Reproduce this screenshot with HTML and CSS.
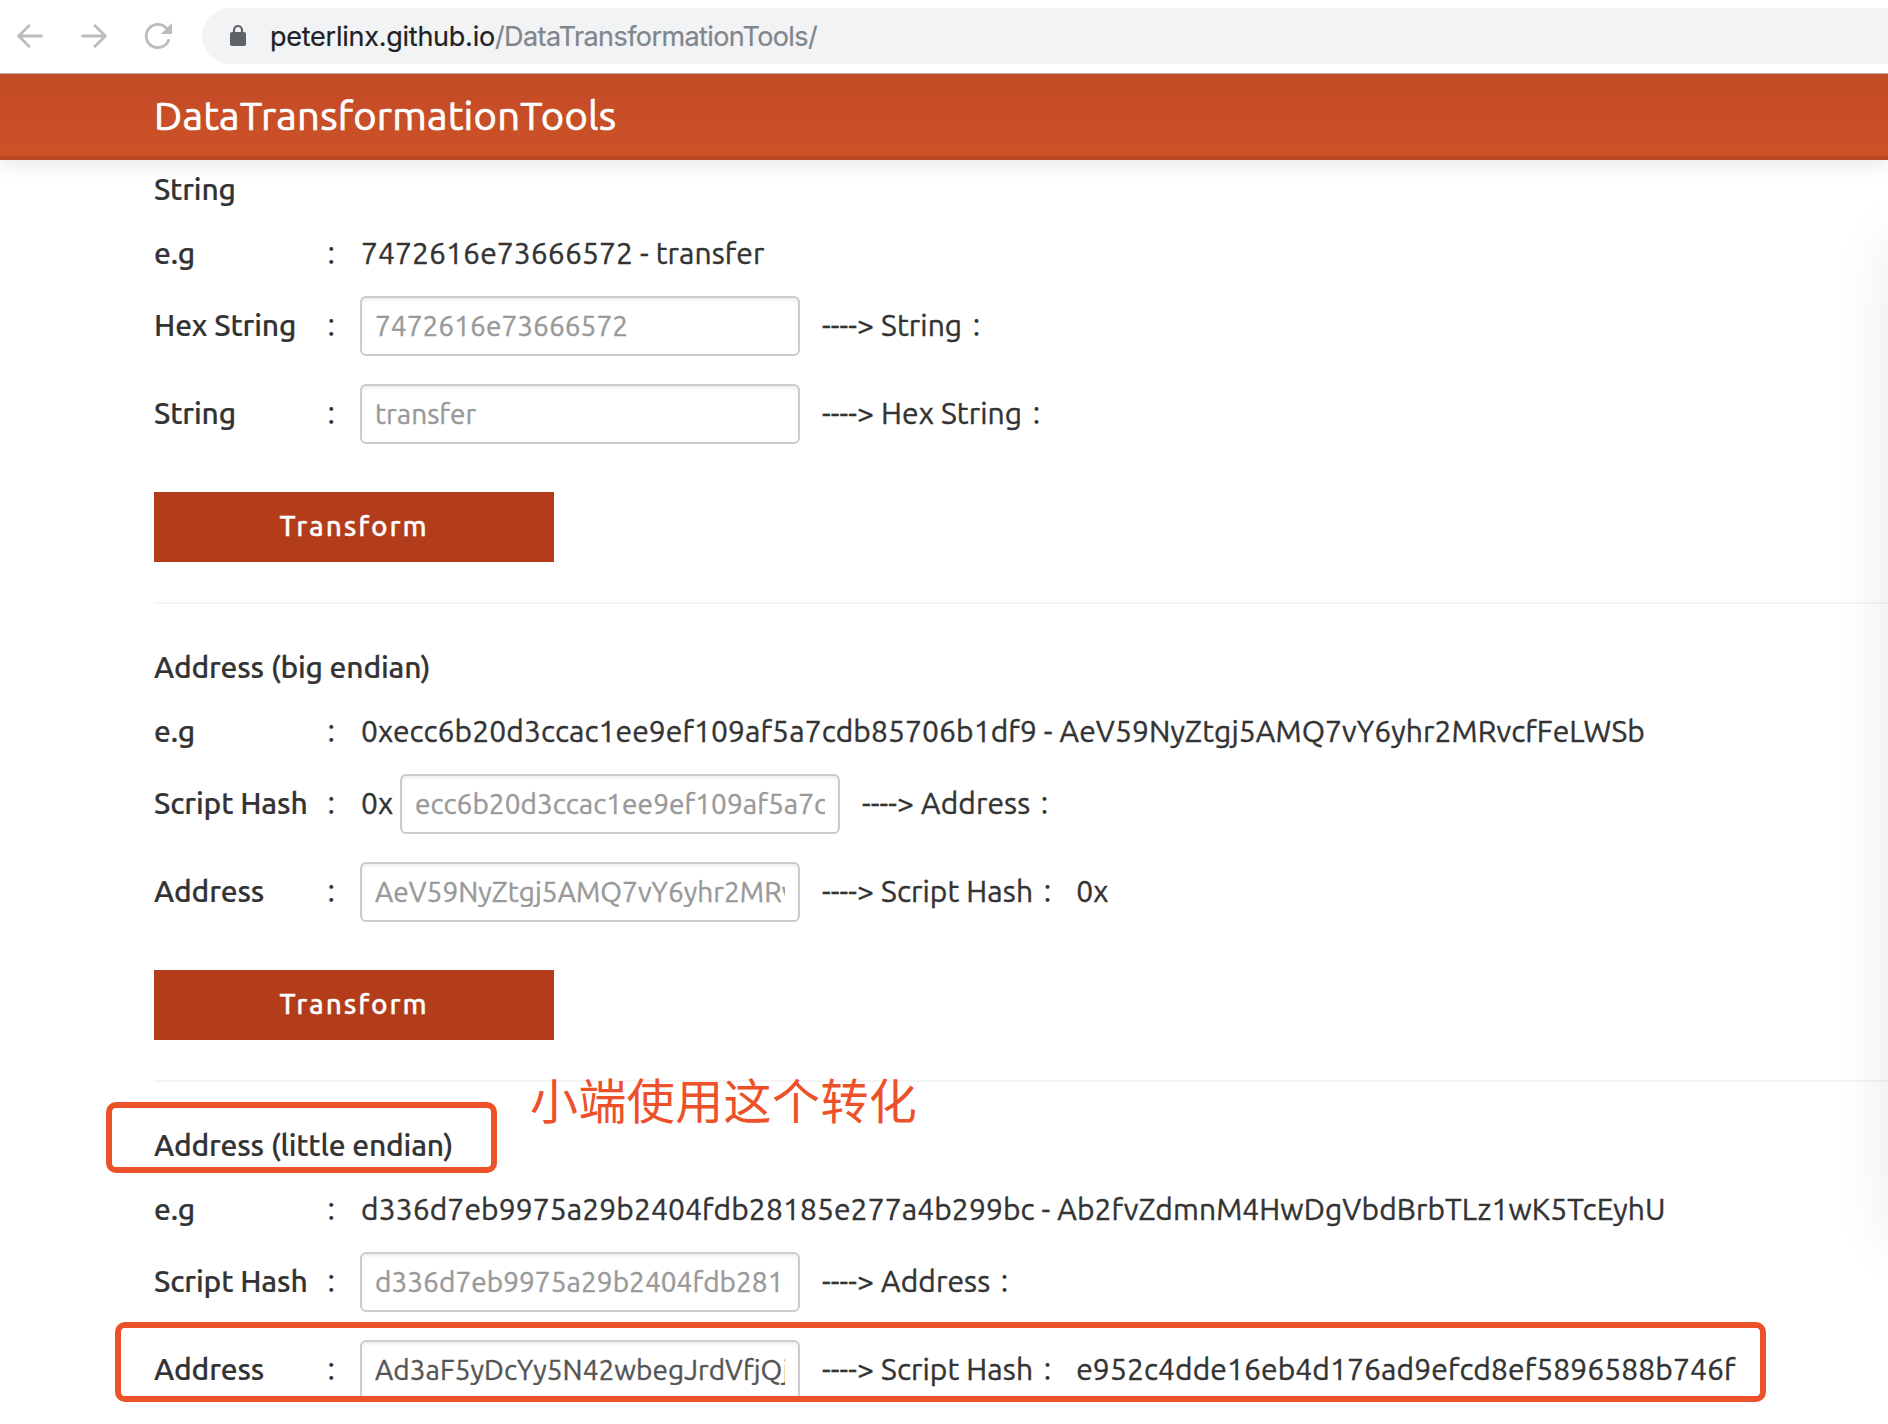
FILE: index.html
```html
<!DOCTYPE html>
<html lang="en">
<head>
<meta charset="utf-8">
<title>DataTransformationTools</title>
<link rel="stylesheet" href="styles.css">
</head>
<body>
<div class="toolbar">
  <svg class="nav-icon" viewBox="0 0 28 28"><path d="M25.5 14H3M13 3.8 2.6 14 13 24.2"/></svg>
  <svg class="nav-icon" viewBox="0 0 28 28"><path d="M2.5 14H25M15 3.8 25.4 14 15 24.2"/></svg>
  <svg class="nav-icon" viewBox="0 0 28 28"><path d="M24.6 18.2A11.6 11.6 0 1 1 22.6 6.4"/><path class="solid" d="M28 1v11H17z"/></svg>
  <div class="omnibox">
    <svg class="lock" viewBox="0 0 16 21"><rect x="0" y="7" width="16" height="14" rx="2"/><path d="M4 8V5a4 4 0 0 1 8 0v3"/></svg>
    <span class="host">peterlinx.github.io</span><span class="path">/DataTransformationTools/</span>
  </div>
</div>
<header class="navbar"><h1>DataTransformationTools</h1></header>
<main class="page">
  <section>
    <h2>String</h2>
    <div class="row example"><span class="label">e.g</span><i class="colon">：</i><span class="sample">7472616e73666572 - transfer</span></div>
    <div class="row"><span class="label">Hex String</span><i class="colon">：</i><input placeholder="7472616e73666572"><span class="result">----&gt; String</span><i class="colon">：</i></div>
    <div class="row"><span class="label">String</span><i class="colon">：</i><input placeholder="transfer"><span class="result">----&gt; Hex String</span><i class="colon">：</i></div>
    <button>Transform</button>
  </section>
  <section>
    <h2>Address (big endian)</h2>
    <div class="row example"><span class="label">e.g</span><i class="colon">：</i><span class="sample">0xecc6b20d3ccac1ee9ef109af5a7cdb85706b1df9 - AeV59NyZtgj5AMQ7vY6yhr2MRvcfFeLWSb</span></div>
    <div class="row"><span class="label">Script Hash</span><i class="colon">：</i><span class="prefix">0x</span><input placeholder="ecc6b20d3ccac1ee9ef109af5a7cdb85706b1df9"><span class="result">----&gt; Address</span><i class="colon">：</i></div>
    <div class="row"><span class="label">Address</span><i class="colon">：</i><input placeholder="AeV59NyZtgj5AMQ7vY6yhr2MRvcfFeLWSb"><span class="result">----&gt; Script Hash</span><i class="colon">：</i><span class="output">0x</span></div>
    <button>Transform</button>
  </section>
  <section>
    <h2>Address (little endian)</h2>
    <div class="row example"><span class="label">e.g</span><i class="colon">：</i><span class="sample">d336d7eb9975a29b2404fdb28185e277a4b299bc - Ab2fvZdmnM4HwDgVbdBrbTLz1wK5TcEyhU</span></div>
    <div class="row"><span class="label">Script Hash</span><i class="colon">：</i><input placeholder="d336d7eb9975a29b2404fdb28185e277a4b299bc"><span class="result">----&gt; Address</span><i class="colon">：</i></div>
    <div class="row"><span class="label">Address</span><i class="colon">：</i><input value="Ad3aF5yDcYy5N42wbegJrdVfjQjb"><span class="result">----&gt; Script Hash</span><i class="colon">：</i><span class="output">e952c4dde16eb4d176ad9efcd8ef5896588b746f</span></div>
  </section>
</main>
<div class="mark mark-heading"></div>
<div class="mark mark-row"></div>
<div class="note" lang="zh-CN">小端使用这个转化</div>
</body>
</html>
```
FILE: styles.css
```css
* { box-sizing: border-box; }
body {
  margin: 0;
  height: 1424px;
  position: relative;
  overflow: hidden;
  background: #fff;
  color: #333;
  font: 450 30px/40px Ubuntu, "Noto Sans", sans-serif;
  letter-spacing: 0.1px;
}

/* Browser toolbar */
.toolbar {
  display: flex;
  align-items: center;
  height: 74px;
  padding: 0 0 2px 16px;
  border-bottom: 1px solid #b9b1ae;
}
.nav-icon {
  width: 28px;
  height: 28px;
  margin-right: 36px;
  fill: none;
  stroke: #babcbe;
  stroke-width: 2.8;
  stroke-linecap: round;
  stroke-linejoin: round;
}
.nav-icon .solid { fill: #babcbe; stroke: none; }
.nav-icon:nth-child(3) { margin-right: 30px; }
.omnibox {
  flex: 1;
  display: flex;
  align-items: center;
  height: 56px;
  padding-left: 28px;
  border-radius: 28px 0 0 28px;
  background: #f1f3f4;
  font: 400 27px/40px Inter, sans-serif;
}
.omnibox span { padding-top: 2px; -webkit-text-stroke: 0.2px; }
.lock { width: 16px; height: 21px; margin-right: 24px; fill: #5f6368; overflow: visible; }
.lock path { fill: none; stroke: #5f6368; stroke-width: 2.2; }
.host { color: #202124; letter-spacing: -0.25px; }
.path { color: #80868b; letter-spacing: -0.58px; }

/* Site header */
.navbar {
  position: relative;
  z-index: 1;
  height: 86px;
  padding-left: 154px;
  background: linear-gradient(#c24a26, #cd5228);
  border-bottom: 4px solid #b94822;
  box-shadow: 0 2px 22px rgba(0, 0, 0, 0.12);
  clip-path: inset(0 0 -40px 0);
}
h1 {
  margin: 0;
  color: #fff;
  font-size: 40px;
  font-weight: 450;
  line-height: 84px;
  letter-spacing: 0.22px;
  -webkit-text-stroke: 0.7px;
}

/* Page body */
.page {
  position: relative;
  height: 1237px;
  padding: 9px 0 0 154px;
  overflow: hidden;
  -webkit-text-stroke: 0.4px;
}
.page::after {
  content: "";
  position: absolute;
  left: 1892px;
  top: 80px;
  width: 60px;
  height: 1000px;
  box-shadow: 0 0 60px rgba(0, 0, 0, 0.1);
}
section + section { border-top: 2px solid #f4f4f4; padding-top: 43px; margin-top: 40px; }
h2 { margin: 0 0 24px; font: inherit; font-weight: 480; letter-spacing: -0.17px; -webkit-text-stroke: 0.2px; }
.row { display: flex; align-items: center; height: 60px; margin-bottom: 28px; white-space: nowrap; }
.row > span { padding-bottom: 2px; }
.row.example { height: 40px; margin-bottom: 23px; }
.row.example > span { padding-bottom: 0; }
.label { width: 171px; font-weight: 480; letter-spacing: -0.13px; -webkit-text-stroke: 0.2px; }
.row > .colon {
  width: 35px;
  padding-bottom: 5px;
  font: 400 25px/40px "Noto Sans CJK SC", sans-serif;
  letter-spacing: 0;
  -webkit-text-stroke: 0;
}
.row.example > .colon { padding-bottom: 3px; }
.sample, .prefix { padding-left: 1px; }
.prefix { width: 40px; }
input {
  width: 440px;
  height: 60px;
  margin: 0 22px 0 0;
  padding: 0 13px 2px 13px;
  border: 2px solid #ccc;
  border-radius: 6px;
  box-shadow: inset 0 2px 3px rgba(0, 0, 0, 0.08);
  background: #fff;
  color: #555;
  font: 400 28px/40px Ubuntu, "Noto Sans", sans-serif;
  letter-spacing: 0.05px;
  -webkit-text-stroke: 0.4px;
}
input::placeholder { color: #999; opacity: 1; }
.result { margin-right: 8px; }
button {
  display: block;
  width: 400px;
  height: 70px;
  margin-top: 48px;
  padding: 0 0 2px 0;
  border: 0;
  background: #b33d1b;
  color: #fff;
  font: 500 28px/40px Ubuntu, "Noto Sans", sans-serif;
  letter-spacing: 1.9px;
  -webkit-text-stroke: 0.3px;
}

/* Annotations drawn over the page */
.mark { position: absolute; z-index: 2; border: 6px solid #ed5129; border-radius: 10px; }
.mark-heading { left: 106px; top: 1102px; width: 391px; height: 71px; }
.mark-row { left: 115px; top: 1322px; width: 1651px; height: 80px; }
.note {
  position: absolute;
  left: 530px;
  top: 1063px;
  color: #ed5129;
  font: 400 48px/70px "Noto Sans CJK SC", sans-serif;
  letter-spacing: 0.4px;
}
```
